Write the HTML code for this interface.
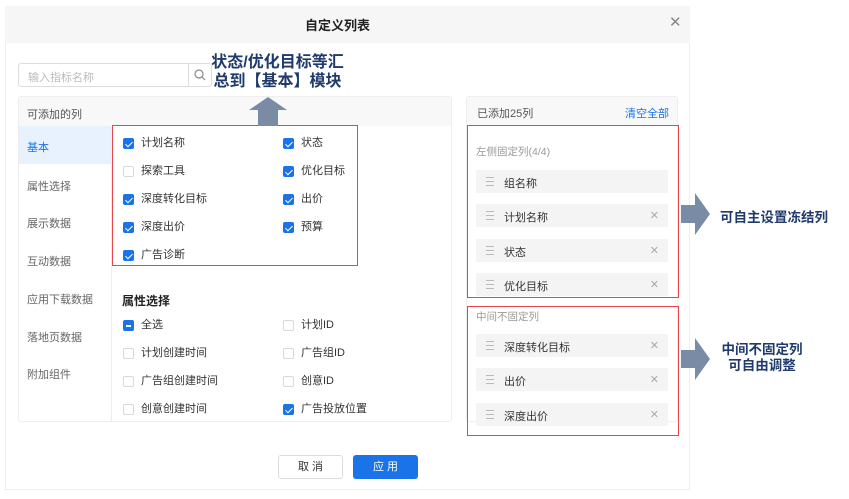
<!DOCTYPE html>
<html><head><meta charset="utf-8"><style>
*{box-sizing:border-box;margin:0;padding:0}
body{width:849px;height:499px;background:#fff;position:relative;overflow:hidden;font-family:"Liberation Sans","Noto Sans CJK SC",sans-serif;font-size:11px;color:#333}
.a{position:absolute}
.dlg{left:5px;top:6px;width:685px;height:484px;border:1px solid #eee;background:#fff}
.hdr{left:5px;top:6px;width:685px;height:37px;background:#f6f6f6}
.cb{position:absolute;width:11px;height:11px;border:1px solid #d9d9d9;border-radius:2px;background:#fff}
.cb.on{background:#1a73e8;border-color:#1a73e8}
.cb.on:after{content:"";position:absolute;left:3px;top:1px;width:3px;height:6px;border:solid #fff;border-width:0 1.5px 1.5px 0;transform:rotate(45deg)}
.cb.ind{background:#1a73e8;border-color:#1a73e8}
.cb.ind:after{content:"";position:absolute;left:2px;top:4px;width:5px;height:1.5px;background:#fff}
.lb{position:absolute;font-size:11px;color:#333;line-height:12px}
.nav{position:absolute;left:27px;font-size:11px;color:#666}
.item{position:absolute;left:476px;width:192px;height:23px;background:#f4f4f4;border-radius:2px}
.item .h{position:absolute;left:10px;top:7px;width:8px;height:9px;border-top:1px solid #bbb;border-bottom:1px solid #bbb}
.item .h:after{content:"";position:absolute;left:0;top:3px;width:8px;height:1px;background:#bbb}
.item .t{position:absolute;left:28px;top:5px;font-size:11px;color:#333}
.item .x{position:absolute;right:9px;top:5px;font-size:11px;color:#aaa}
.red{position:absolute;border:1.5px solid #e8464f}
.note{color:#1f3a6b;font-weight:bold;font-size:13.5px}
</style></head><body>
<div class="a dlg"></div>
<div class="a hdr"></div>
<div class="a" style="left:305px;top:15px;font-size:13px;font-weight:bold;color:#222">自定义列表</div>
<div class="a" style="left:669px;top:13px;font-size:15px;color:#888">✕</div>

<div class="a" style="left:18px;top:63px;width:194px;height:24px;border:1px solid #ddd;border-radius:3px"></div>
<div class="a" style="left:188px;top:63px;width:1px;height:24px;background:#ddd"></div>
<div class="a" style="left:28px;top:69px;color:#bbb;font-size:11px">输入指标名称</div>
<svg class="a" style="left:193px;top:68px" width="14" height="14"><circle cx="6" cy="6" r="4" fill="none" stroke="#888" stroke-width="1.2"/><line x1="9" y1="9" x2="12" y2="12" stroke="#888" stroke-width="1.2"/></svg>

<div class="a" style="left:18px;top:96px;width:434px;height:326px;border:1px solid #eee;border-radius:3px"></div>
<div class="a" style="left:19px;top:97px;width:432px;height:29px;background:#f8f8f8"></div>
<div class="a" style="left:27px;top:106px;color:#555">可添加的列</div>
<div class="a" style="left:111px;top:126px;width:1px;height:296px;background:#eee"></div>
<div class="a" style="left:19px;top:126px;width:92px;height:38px;background:#e8f2ff"></div>
<div class="nav" style="top:139px;color:#1a73e8">基本</div>
<div class="nav" style="top:178px">属性选择</div>
<div class="nav" style="top:215px">展示数据</div>
<div class="nav" style="top:253px">互动数据</div>
<div class="nav" style="top:291px">应用下载数据</div>
<div class="nav" style="top:329px">落地页数据</div>
<div class="nav" style="top:366px">附加组件</div>

<div class="cb on" style="left:123px;top:138px"></div><div class="lb" style="left:141px;top:137px">计划名称</div>
<div class="cb on" style="left:283px;top:138px"></div><div class="lb" style="left:301px;top:137px">状态</div>
<div class="cb" style="left:123px;top:166px"></div><div class="lb" style="left:141px;top:165px">探索工具</div>
<div class="cb on" style="left:283px;top:166px"></div><div class="lb" style="left:301px;top:165px">优化目标</div>
<div class="cb on" style="left:123px;top:194px"></div><div class="lb" style="left:141px;top:193px">深度转化目标</div>
<div class="cb on" style="left:283px;top:194px"></div><div class="lb" style="left:301px;top:193px">出价</div>
<div class="cb on" style="left:123px;top:222px"></div><div class="lb" style="left:141px;top:221px">深度出价</div>
<div class="cb on" style="left:283px;top:222px"></div><div class="lb" style="left:301px;top:221px">预算</div>
<div class="cb on" style="left:123px;top:250px"></div><div class="lb" style="left:141px;top:249px">广告诊断</div>
<div class="red" style="left:112px;top:125px;width:246px;height:141px"></div>

<div class="a" style="left:122px;top:292px;font-size:12px;font-weight:bold;color:#222">属性选择</div>
<div class="cb ind" style="left:123px;top:320px"></div><div class="lb" style="left:141px;top:319px">全选</div>
<div class="cb" style="left:283px;top:320px"></div><div class="lb" style="left:301px;top:319px">计划ID</div>
<div class="cb" style="left:123px;top:348px"></div><div class="lb" style="left:141px;top:347px">计划创建时间</div>
<div class="cb" style="left:283px;top:348px"></div><div class="lb" style="left:301px;top:347px">广告组ID</div>
<div class="cb" style="left:123px;top:376px"></div><div class="lb" style="left:141px;top:375px">广告组创建时间</div>
<div class="cb" style="left:283px;top:376px"></div><div class="lb" style="left:301px;top:375px">创意ID</div>
<div class="cb" style="left:123px;top:404px"></div><div class="lb" style="left:141px;top:403px">创意创建时间</div>
<div class="cb on" style="left:283px;top:404px"></div><div class="lb" style="left:301px;top:403px">广告投放位置</div>

<div class="a" style="left:466px;top:96px;width:212px;height:326px;border:1px solid #eee;border-radius:3px"></div>
<div class="a" style="left:467px;top:97px;width:210px;height:28px;background:#f8f8f8"></div>
<div class="a" style="left:477px;top:105px;color:#555">已添加25列</div>
<div class="a" style="left:625px;top:105px;color:#1a73e8">清空全部</div>
<div class="a" style="left:476px;top:144px;color:#999;font-size:10.5px">左侧固定列(4/4)</div>
<div class="item" style="top:170px"><div class="h"></div><div class="t">组名称</div></div>
<div class="item" style="top:204px"><div class="h"></div><div class="t">计划名称</div><div class="x">✕</div></div>
<div class="item" style="top:239px"><div class="h"></div><div class="t">状态</div><div class="x">✕</div></div>
<div class="item" style="top:273px"><div class="h"></div><div class="t">优化目标</div><div class="x">✕</div></div>
<div class="a" style="left:476px;top:309px;color:#999;font-size:10.5px">中间不固定列</div>
<div class="item" style="top:334px"><div class="h"></div><div class="t">深度转化目标</div><div class="x">✕</div></div>
<div class="item" style="top:368px"><div class="h"></div><div class="t">出价</div><div class="x">✕</div></div>
<div class="item" style="top:403px"><div class="h"></div><div class="t">深度出价</div><div class="x">✕</div></div>
<div class="red" style="left:467px;top:125px;width:212px;height:173px"></div>
<div class="red" style="left:467px;top:306px;width:212px;height:130px"></div>

<div class="a" style="left:278px;top:455px;width:65px;height:24px;border:1px solid #ddd;border-radius:3px;text-align:center;line-height:22px;color:#333">取 消</div>
<div class="a" style="left:353px;top:455px;width:65px;height:24px;background:#1a73e8;border-radius:3px;text-align:center;line-height:24px;color:#fff">应 用</div>

<div class="a note" style="left:200px;top:53px;width:155px;text-align:center;font-size:16px;line-height:19px">状态/优化目标等汇<br>总到【基本】模块</div>
<svg class="a" style="left:248px;top:96px" width="40" height="30"><polygon points="20,1 39,14 30,14 30,30 10,30 10,14 1,14" fill="#7a8ca5"/></svg>

<svg class="a" style="left:681px;top:193px" width="30" height="43"><polygon points="0,12 14,12 14,0 29,21 14,42 14,30 0,30" fill="#7a8ca5"/></svg>
<div class="a note" style="left:720px;top:206px">可自主设置冻结列</div>
<svg class="a" style="left:681px;top:338px" width="30" height="43"><polygon points="0,12 14,12 14,0 29,21 14,42 14,30 0,30" fill="#7a8ca5"/></svg>
<div class="a note" style="left:712px;top:342px;width:100px;text-align:center;line-height:16px">中间不固定列<br>可自由调整</div>
</body></html>
